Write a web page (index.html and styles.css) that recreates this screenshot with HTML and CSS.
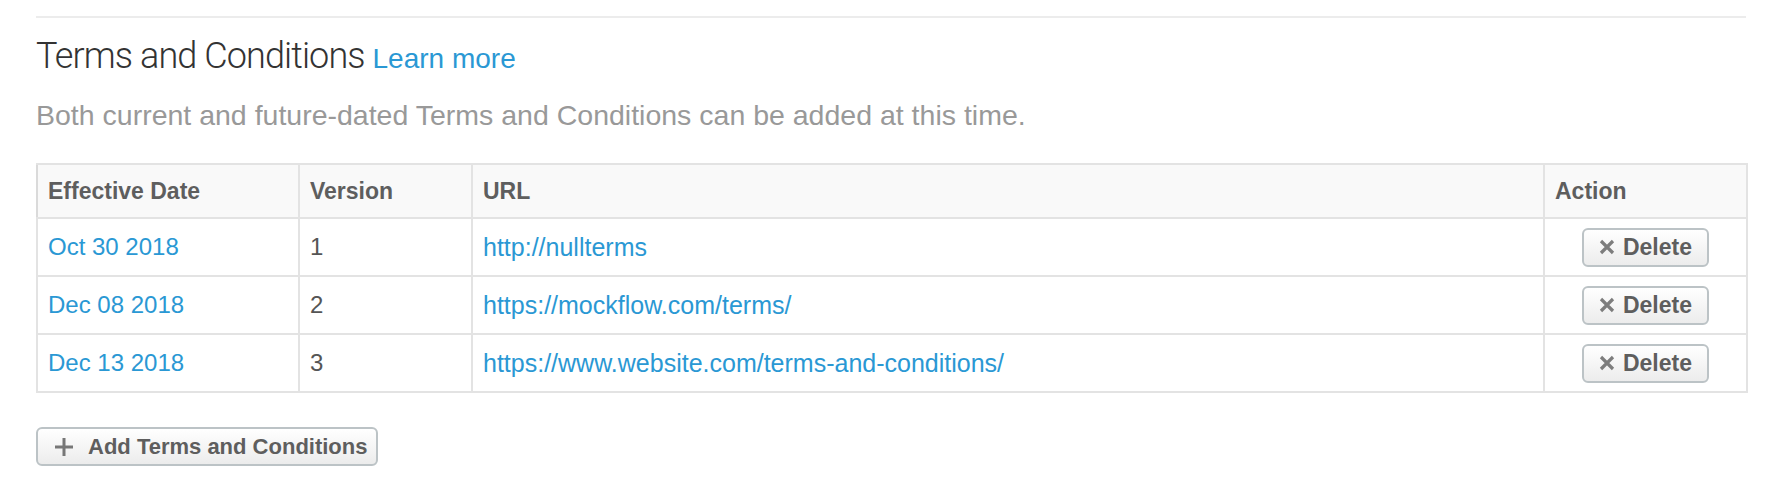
FILE: index.html
```html
<!DOCTYPE html>
<html>
<head>
<meta charset="utf-8">
<link rel="stylesheet" href="styles.css">
</head>
<body>
<div class="section">
  <div class="rule"></div>
  <h2 class="title">Terms and Conditions <a class="learn" href="#">Learn more</a></h2>
  <p class="desc">Both current and future-dated Terms and Conditions can be added at this time.</p>
  <table class="terms">
    <colgroup>
      <col class="c-date"><col class="c-ver"><col class="c-url"><col class="c-act">
    </colgroup>
    <thead>
      <tr><th>Effective Date</th><th>Version</th><th>URL</th><th>Action</th></tr>
    </thead>
    <tbody>
      <tr>
        <td><a href="#">Oct 30 2018</a></td>
        <td class="num">1</td>
        <td class="url"><a href="#">http://nullterms</a></td>
        <td class="act"><button class="btn del"><svg class="ico" viewBox="0 0 16 16"><path d="M2 2L14 14M14 2L2 14"/></svg>Delete</button></td>
      </tr>
      <tr>
        <td><a href="#">Dec 08 2018</a></td>
        <td class="num">2</td>
        <td class="url"><a href="#">https://mockflow.com/terms/</a></td>
        <td class="act"><button class="btn del"><svg class="ico" viewBox="0 0 16 16"><path d="M2 2L14 14M14 2L2 14"/></svg>Delete</button></td>
      </tr>
      <tr>
        <td><a href="#">Dec 13 2018</a></td>
        <td class="num">3</td>
        <td class="url"><a href="#">https://www.website.com/terms-and-conditions/</a></td>
        <td class="act"><button class="btn del"><svg class="ico" viewBox="0 0 16 16"><path d="M2 2L14 14M14 2L2 14"/></svg>Delete</button></td>
      </tr>
    </tbody>
  </table>
  <button class="btn add"><svg class="plus" viewBox="0 0 20 20"><path d="M10 1V19M1 10H19"/></svg>Add Terms and Conditions</button>
</div>
</body>
</html>
```

FILE: styles.css
```css
html, body {
  margin: 0;
  padding: 0;
  background: #fff;
}
body {
  font-family: "Liberation Sans", Arial, Helvetica, sans-serif;
}
.section {
  padding: 16px 28px 0 36px;
}
.rule {
  height: 2px;
  background: #ececec;
}
.title {
  margin: 16px 0 0 0;
  font-family: "Roboto", "Liberation Sans", sans-serif;
  font-weight: 300;
  font-size: 36px;
  line-height: 44px;
  color: #333;
  letter-spacing: -0.9px;
}
.learn {
  font-family: "Liberation Sans", Arial, sans-serif;
  font-weight: 400;
  font-size: 28px;
  letter-spacing: 0;
  color: #2a98d4;
  text-decoration: none;
}
.desc {
  margin: 16px 0 0 0;
  font-size: 28.5px;
  line-height: 36px;
  color: #999;
}
.terms {
  margin-top: 30px;
  width: 1710px;
  border-collapse: collapse;
  border: 2px solid #dadada;
  table-layout: fixed;
}
.c-date { width: 262px; }
.c-ver { width: 173px; }
.c-url { width: 1072px; }
.c-act { width: 203px; }
.terms th, .terms td {
  border: 2px solid #e3e3e3;
  text-align: left;
  padding: 0 10px;
  font-size: 24px;
}
.terms th {
  height: 52px;
  background: #f9f9f9;
  color: #5e5e5e;
  font-weight: 700;
  font-size: 23px;
  border-left-color: #dadada;
}
.terms td {
  height: 56px;
  color: #555;
}
.terms td.url {
  font-size: 25px;
}
.terms td a {
  color: #2a98d4;
  text-decoration: none;
}
.terms td.act {
  text-align: center;
  padding: 0;
}
.btn {
  font-family: "Liberation Sans", Arial, sans-serif;
  font-weight: 700;
  font-size: 22px;
  color: #5e5e5e;
  background: linear-gradient(#ffffff, #ececec);
  border: 2px solid #bcc3c6;
  border-radius: 6px;
  display: inline-flex;
  align-items: center;
  padding: 0;
  cursor: pointer;
}
.del {
  width: 127px;
  height: 39px;
  justify-content: center;
  gap: 8px;
  font-size: 23px;
}
.ico {
  width: 16px;
  height: 16px;
  stroke: #7d7d7d;
  stroke-width: 3.2;
  fill: none;
}
.add {
  margin-top: 34px;
  width: 342px;
  height: 39px;
  padding-left: 16px;
  gap: 14px;
}
.plus {
  width: 20px;
  height: 20px;
  stroke: #777;
  stroke-width: 3;
  fill: none;
}
```
